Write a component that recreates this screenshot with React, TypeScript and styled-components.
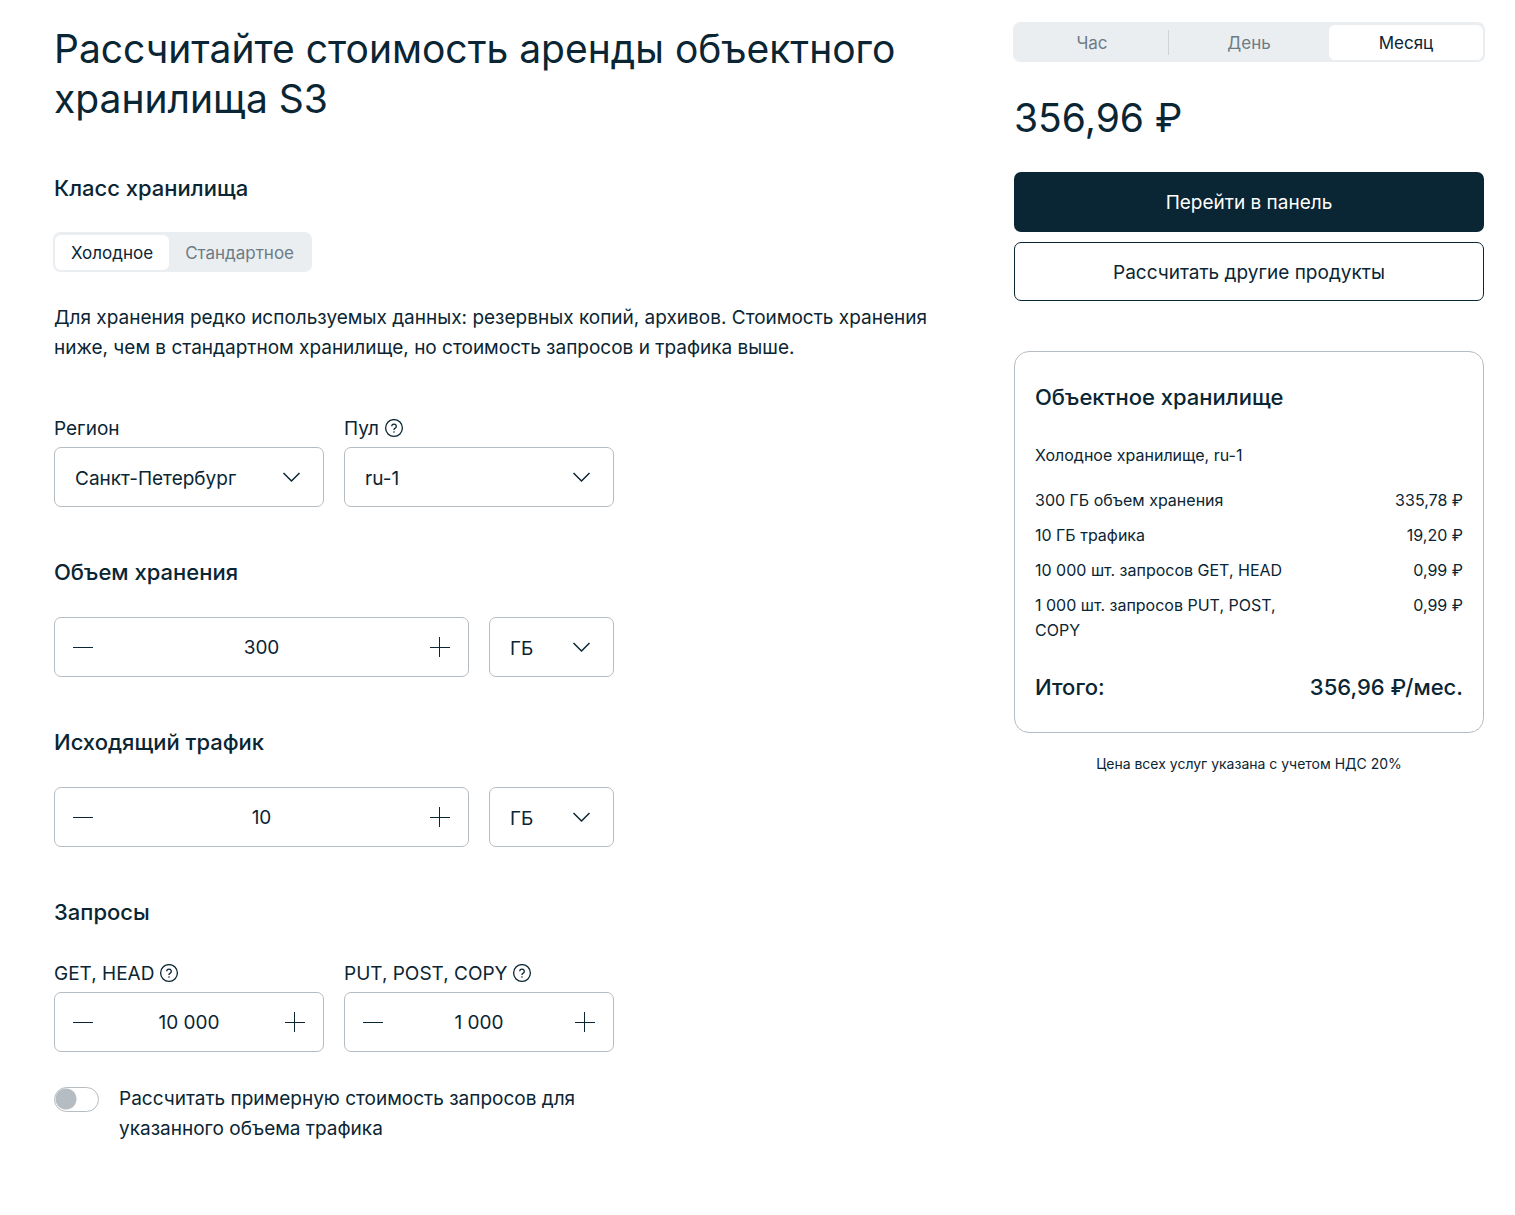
import React, { useState } from 'react';
import styled, { createGlobalStyle, css } from 'styled-components';

const ink = '#0a2533';
const muted = '#6b7c85';
const line = '#b5bdc3';
const soft = '#ebeef1';

const GlobalStyle = createGlobalStyle`
  *, *::before, *::after { box-sizing: border-box; }
  body {
    margin: 0;
    background: #fff;
    color: ${ink};
    font: 400 19px/30px Inter, "Liberation Sans", sans-serif;
  }
  button, input, select { font: inherit; color: inherit; }
  h1, h2, p, dl, dd, dt, fieldset { margin: 0; padding: 0; }
`;

const Page = styled.main`
  display: grid;
  grid-template-columns: minmax(0, 1fr) 470px;
  gap: 60px;
  align-items: start;
  padding: 23px 31px 60px 54px;

  @media (max-width: 1100px) {
    grid-template-columns: minmax(0, 1fr);
  }
`;

const Column = styled.div`
  display: flex;
  flex-direction: column;
  gap: 49px;
`;

const Title = styled.h1`
  padding-top: 1px;
  font-size: 39px;
  line-height: 50px;
  font-weight: 400;
`;

const Section = styled.section`
  display: flex;
  flex-direction: column;
  align-items: flex-start;
  gap: 30px;
`;

const Heading = styled.h2`
  font-size: 22px;
  line-height: 30px;
  font-weight: 500;
`;

const Description = styled.p`
  padding-top: 2px;
`;

const Form = styled.div`
  display: flex;
  flex-direction: column;
  gap: 50px;
  width: 100%;
  max-width: 560px;
`;

const Fields = styled.div<{ $columns: string }>`
  display: grid;
  grid-template-columns: ${(p) => p.$columns};
  gap: 20px;
  width: 100%;
`;

const Field = styled.div`
  display: flex;
  flex-direction: column;
  gap: 3px;
`;

const LabelRow = styled.div`
  display: flex;
  align-items: center;
  gap: 5px;
  padding-top: 2px;
`;

const HelpButton = styled.button`
  display: flex;
  padding: 0;
  border: 0;
  background: none;
  cursor: pointer;
`;

const controlBox = css`
  height: 60px;
  border: 1px solid ${line};
  border-radius: 7px;
  background: #fff;
`;

const SelectWrap = styled.div`
  display: grid;
  align-items: center;

  > * { grid-area: 1 / 1; }
  > svg { justify-self: end; margin-right: 22px; pointer-events: none; }
`;

const SelectControl = styled.select`
  ${controlBox}
  width: 100%;
  padding: 3px 50px 0 20px;
  appearance: none;
`;

const StepperBox = styled.div`
  ${controlBox}
  display: flex;
  align-items: center;
  padding: 0 13px;
`;

const StepButton = styled.button`
  display: flex;
  flex: none;
  padding: 5px;
  border: 0;
  background: none;
  cursor: pointer;
`;

const StepInput = styled.input`
  flex: 1;
  min-width: 0;
  padding: 2px 0 0;
  border: 0;
  outline: 0;
  background: none;
  text-align: center;
`;

const Segments = styled.fieldset<{ $even?: boolean }>`
  display: flex;
  gap: ${(p) => (p.$even ? '3px' : '0')};
  width: ${(p) => (p.$even ? '100%' : 'auto')};
  min-width: 0;
  padding: 2px 1px 1px;
  border: 0;
  border-radius: 6px;
  background: ${soft};
  box-shadow: 0 0 0 1px ${soft};
`;

const Segment = styled.label<{ $even?: boolean; $divided?: boolean }>`
  position: relative;
  display: flex;
  flex: ${(p) => (p.$even ? '1 1 0' : 'none')};
  align-items: center;
  justify-content: center;
  padding: 2px 16px 0;
  border-radius: 6px;
  color: ${muted};
  font-size: 17px;
  line-height: 33px;
  cursor: pointer;

  &:has(input:checked) {
    background: #fff;
    color: ${ink};
  }

  ${(p) => p.$divided && css`
    &::after {
      content: '';
      position: absolute;
      right: 0;
      top: 5px;
      bottom: 5px;
      width: 1px;
      background: #cdd3d7;
    }
  `}
`;

const SegmentInput = styled.input`
  position: absolute;
  opacity: 0;
  margin: 0;
`;

const SwitchRow = styled.div`
  display: flex;
  align-items: flex-start;
  gap: 20px;
`;

const SwitchLabel = styled.label`
  padding-top: 2px;
`;

const Switch = styled.input`
  flex: none;
  width: 45px;
  height: 25px;
  margin: 5px 0 0;
  border: 1px solid ${line};
  border-radius: 13px;
  background: radial-gradient(circle at 11px 11px, ${line} 10px, transparent 11px);
  appearance: none;
  cursor: pointer;

  &:checked {
    background: radial-gradient(circle at 31px 11px, ${ink} 10px, transparent 11px);
  }
`;

const Aside = styled.aside`
  display: flex;
  flex-direction: column;
`;

const Price = styled.p`
  margin: 32px 0 29px;
  font-size: 39px;
  line-height: 50px;
  font-weight: 400;
`;

const Actions = styled.div`
  display: flex;
  flex-direction: column;
  gap: 10px;
  margin-bottom: 50px;
`;

const Action = styled.button<{ $outline?: boolean }>`
  padding: ${(p) => (p.$outline ? '15px 20px 12px' : '16px 20px 14px')};
  border: ${(p) => (p.$outline ? `1px solid ${ink}` : '0')};
  border-radius: 7px;
  background: ${(p) => (p.$outline ? '#fff' : ink)};
  color: ${(p) => (p.$outline ? ink : '#fff')};
  cursor: pointer;
`;

const Card = styled.section`
  display: flex;
  flex-direction: column;
  padding: 30px 20px;
  border: 1px solid ${line};
  border-radius: 15px;
  font-size: 16px;
  line-height: 25px;
`;

const Kind = styled.p`
  margin: 31px 0 20px;
`;

const CostList = styled.dl`
  display: flex;
  flex-direction: column;
  gap: 10px;
`;

const CostRow = styled.div`
  display: flex;
  justify-content: space-between;
`;

const CostName = styled.dt`
  max-width: 60%;
`;

const Total = styled.div`
  display: flex;
  justify-content: space-between;
  margin-top: 29px;
  font-size: 22px;
  line-height: 30px;
  font-weight: 500;
`;

const Note = styled.p`
  margin-top: 21px;
  font-size: 14px;
  line-height: 20px;
  text-align: center;
`;

const Chevron = () => (
  <svg width="20" height="20" viewBox="0 0 20 20" fill="none" stroke={ink} strokeWidth="1.5" aria-hidden="true">
    <path d="M1.5 6l8 8 8-8" />
  </svg>
);

const Minus = () => (
  <svg width="20" height="20" viewBox="0 0 20 20" stroke={ink} aria-hidden="true">
    <path d="M0 10.5h20" />
  </svg>
);

const Plus = () => (
  <svg width="20" height="20" viewBox="0 0 20 20" stroke={ink} aria-hidden="true">
    <path d="M0 10.5h20M9.5 0v20" />
  </svg>
);

const Help = ({ about }: { about: string }) => (
  <HelpButton type="button" aria-label={`Подсказка: ${about}`}>
    <svg width="20" height="20" viewBox="0 0 20 20" fill="none" stroke={ink} strokeWidth="1.3" aria-hidden="true">
      <circle cx="10" cy="9" r="8.4" />
      <path d="M7.7 7.3a2.3 2.2 0 1 1 3.5 1.9c-.8.4-1.2.7-1.2 1.4v.3" />
      <circle cx="10" cy="13" r=".8" fill={ink} stroke="none" />
    </svg>
  </HelpButton>
);

function Select({ id, label, options }: { id: string; label?: string; options: string[] }) {
  return (
    <SelectWrap>
      <SelectControl id={id} aria-label={label}>
        {options.map((o) => <option key={o}>{o}</option>)}
      </SelectControl>
      <Chevron />
    </SelectWrap>
  );
}

const format = (n: number) => String(n).replace(/\B(?=(\d{3})+$)/g, ' ');

function Stepper({ id, label, start, step }: { id: string; label?: string; start: number; step: number }) {
  const [value, setValue] = useState(start);
  return (
    <StepperBox>
      <StepButton type="button" aria-label="Уменьшить" onClick={() => setValue(Math.max(0, value - step))}>
        <Minus />
      </StepButton>
      <StepInput
        id={id}
        type="text"
        inputMode="numeric"
        aria-label={label}
        value={format(value)}
        onChange={(e) => setValue(Number(e.target.value.replace(/\D/g, '')))}
      />
      <StepButton type="button" aria-label="Увеличить" onClick={() => setValue(value + step)}>
        <Plus />
      </StepButton>
    </StepperBox>
  );
}

function SegmentedControl({ name, label, options, start, even }: {
  name: string; label: string; options: string[]; start: number; even?: boolean;
}) {
  const [active, setActive] = useState(start);
  return (
    <Segments $even={even} aria-label={label}>
      {options.map((o, i) => (
        <Segment
          key={o}
          $even={even}
          $divided={i < options.length - 1 && i !== active && i + 1 !== active}
        >
          <SegmentInput type="radio" name={name} checked={i === active} onChange={() => setActive(i)} />
          {o}
        </Segment>
      ))}
    </Segments>
  );
}

const costs = [
  ['300 ГБ объем хранения', '335,78 ₽'],
  ['10 ГБ трафика', '19,20 ₽'],
  ['10 000 шт. запросов GET, HEAD', '0,99 ₽'],
  ['1 000 шт. запросов PUT, POST, COPY', '0,99 ₽'],
];

const halves = 'repeat(2, minmax(0, 1fr))';
const withUnit = 'minmax(0, 1fr) 125px';

export default function App() {
  return (
    <>
      <GlobalStyle />
      <Page>
        <Column>
          <Title>Рассчитайте стоимость аренды объектного хранилища S3</Title>

          <Section>
            <Heading>Класс хранилища</Heading>
            <SegmentedControl name="class" label="Класс хранилища" options={['Холодное', 'Стандартное']} start={0} />
            <Description>
              Для хранения редко используемых данных: резервных копий, архивов. Стоимость хранения
              ниже, чем в стандартном хранилище, но стоимость запросов и трафика выше.
            </Description>
          </Section>

          <Form>
            <Fields $columns={halves}>
              <Field>
                <LabelRow><label htmlFor="region">Регион</label></LabelRow>
                <Select id="region" options={['Санкт-Петербург', 'Москва']} />
              </Field>
              <Field>
                <LabelRow><label htmlFor="pool">Пул</label><Help about="Пул" /></LabelRow>
                <Select id="pool" options={['ru-1', 'ru-7']} />
              </Field>
            </Fields>

            <Section>
              <Heading>Объем хранения</Heading>
              <Fields $columns={withUnit}>
                <Stepper id="storage" label="Объем хранения" start={300} step={10} />
                <Select id="storage-unit" label="Единица объема" options={['ГБ', 'ТБ']} />
              </Fields>
            </Section>

            <Section>
              <Heading>Исходящий трафик</Heading>
              <Fields $columns={withUnit}>
                <Stepper id="traffic" label="Исходящий трафик" start={10} step={10} />
                <Select id="traffic-unit" label="Единица трафика" options={['ГБ', 'ТБ']} />
              </Fields>
            </Section>

            <Section>
              <Heading>Запросы</Heading>
              <Fields $columns={halves}>
                <Field>
                  <LabelRow><label htmlFor="get">GET, HEAD</label><Help about="GET, HEAD" /></LabelRow>
                  <Stepper id="get" start={10000} step={1000} />
                </Field>
                <Field>
                  <LabelRow><label htmlFor="put">PUT, POST, COPY</label><Help about="PUT, POST, COPY" /></LabelRow>
                  <Stepper id="put" start={1000} step={1000} />
                </Field>
              </Fields>
              <SwitchRow>
                <Switch type="checkbox" role="switch" id="estimate" />
                <SwitchLabel htmlFor="estimate">
                  Рассчитать примерную стоимость запросов для указанного объема трафика
                </SwitchLabel>
              </SwitchRow>
            </Section>
          </Form>
        </Column>

        <Aside>
          <SegmentedControl name="period" label="Период" options={['Час', 'День', 'Месяц']} start={2} even />
          <Price>356,96 ₽</Price>
          <Actions>
            <Action type="button">Перейти в панель</Action>
            <Action type="button" $outline>Рассчитать другие продукты</Action>
          </Actions>
          <Card>
            <Heading>Объектное хранилище</Heading>
            <Kind>Холодное хранилище, ru-1</Kind>
            <CostList>
              {costs.map(([name, price]) => (
                <CostRow key={name}>
                  <CostName>{name}</CostName>
                  <dd>{price}</dd>
                </CostRow>
              ))}
            </CostList>
            <Total>
              <span>Итого:</span>
              <span>356,96 ₽/мес.</span>
            </Total>
          </Card>
          <Note>Цена всех услуг указана с учетом НДС 20%</Note>
        </Aside>
      </Page>
    </>
  );
}
